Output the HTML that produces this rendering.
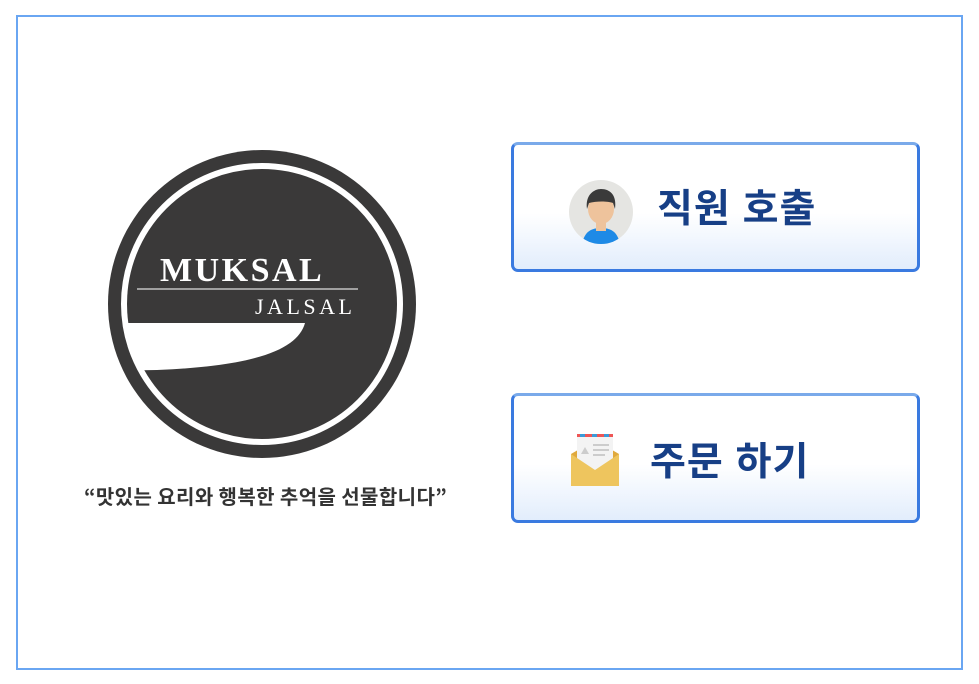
<!DOCTYPE html>
<html><head><meta charset="utf-8"><style>
body{margin:0;width:979px;height:684px;background:#fff;position:relative;overflow:hidden;font-family:"Liberation Sans","Noto Sans CJK KR",sans-serif}
.frame{position:absolute;left:16px;top:15px;width:943px;height:651px;border:2px solid #6aa6f2}
.btn{position:absolute;left:511px;width:403px;height:124px;border:3px solid #3a7ae0;border-top-color:#7aaaea;border-radius:7px;background:linear-gradient(#ffffff 0%,#ffffff 55%,#e2edfc 100%);box-sizing:content-box}
.btn span{position:absolute;font-weight:bold;font-size:39px;color:#173f86;letter-spacing:1px;line-height:1}
.tag{position:absolute;left:84px;top:481px;font-size:20px;color:#333;font-family:"Noto Sans CJK KR",sans-serif;font-weight:bold;white-space:nowrap;letter-spacing:0.4px}
</style></head><body>
<div class="frame"></div>
<svg style="position:absolute;left:0;top:0" width="979" height="684">
<defs><clipPath id="ci"><circle cx="262" cy="304" r="140"/></clipPath></defs>
<circle cx="262" cy="304" r="154" fill="#3a3939"/>
<circle cx="262" cy="304" r="138" fill="none" stroke="#fff" stroke-width="6"/>
<path clip-path="url(#ci)" d="M100 323 L305 323 C298 348 260 366 157 370 L100 371 Z" fill="#fff"/>
<text x="160" y="281" font-family="Liberation Serif,serif" font-weight="bold" font-size="34" fill="#fff" letter-spacing="2.5">MUKSAL</text>
<line x1="137" y1="289" x2="358" y2="289" stroke="#ddd" stroke-width="1.2"/>
<text x="255" y="314" font-family="Liberation Serif,serif" font-size="22" fill="#fff" letter-spacing="3.5">JALSAL</text>
</svg>
<div class="tag">“맛있는 요리와 행복한 추억을 선물합니다”</div>
<div class="btn" style="top:142px">
<svg style="position:absolute;left:54px;top:34px" width="66" height="66" viewBox="0 0 66 66">
<defs><clipPath id="c"><circle cx="33" cy="33" r="32"/></clipPath></defs>
<circle cx="33" cy="33" r="32" fill="#e5e5e2"/>
<g clip-path="url(#c)">
<path d="M14 66 C16 52 24 49 33 49 C42 49 50 52 52 66Z" fill="#1e8ae6"/>
<rect x="28" y="40" width="10" height="12" fill="#eec39c"/>
<ellipse cx="33" cy="30" rx="13" ry="15" fill="#eec39c"/>
<path d="M19 30 C17 16 26 10 33 10 C42 10 49 16 47 30 L45 24 C40 22 28 22 21 24Z" fill="#3a3a3a"/>
</g></svg>
<span style="left:143px;top:45px">직원 호출</span>
</div>
<div class="btn" style="top:393px">
<svg style="position:absolute;left:54px;top:36px" width="54" height="54" viewBox="0 0 54 54">
<path d="M3 22 L27 8 L51 22 L51 54 L3 54Z" fill="#e0a93c"/>
<rect x="9" y="2" width="36" height="38" fill="#f3f3f3"/>
<path d="M9 2h36v3H9z" fill="#e55"/>
<path d="M12 2h5v3h-5zM24 2h5v3h-5zM36 2h5v3h-5z" fill="#3a9ad8"/>
<path d="M13 22 L17 15 L21 22Z" fill="#ccc"/>
<rect x="25" y="12" width="16" height="2" fill="#ccc"/><rect x="25" y="17" width="16" height="2" fill="#ccc"/><rect x="25" y="22" width="12" height="2" fill="#ccc"/>
<path d="M3 22 L27 38 L51 22 L51 54 L3 54Z" fill="#eec55e"/>
</svg>
<span style="left:136px;top:47px">주문 하기</span>
</div>
</body></html>
